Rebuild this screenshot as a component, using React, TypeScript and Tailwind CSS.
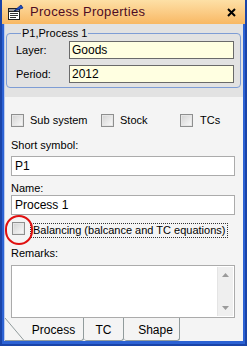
import React from 'react';

const font = { fontFamily: '"Liberation Sans", Arial, sans-serif' };

function CheckBox() {
  return (
    <span className="inline-block w-[13px] h-[13px] border border-[#8e8f8f] bg-gradient-to-br from-[#d2d2d2] to-[#fbfbfb] shadow-[inset_0_0_0_1px_#e6e6e6] shrink-0" />
  );
}

function TitleIcon() {
  return (
    <svg width="17" height="17" viewBox="0 0 17 17" className="shrink-0">
      <rect x="1.5" y="4.5" width="11" height="11" fill="#fff" stroke="#222" />
      <rect x="1.5" y="4.5" width="11" height="3" fill="#9a9a9a" stroke="#222" />
      <line x1="3" y1="9.5" x2="11" y2="9.5" stroke="#333" />
      <line x1="3" y1="11.5" x2="11" y2="11.5" stroke="#333" />
      <line x1="3" y1="13.5" x2="9" y2="13.5" stroke="#333" />
      <path d="M7 7 L14 1 L16 4 Z" fill="#1d4fc4" stroke="#0a2a80" strokeWidth="0.8" />
      <path d="M7 7 L9 6 L8 8 Z" fill="#111" />
    </svg>
  );
}

export default function App() {
  return (
    <div className="w-[247px] h-[346px] flex flex-col bg-[#2c62d4] border-x-2 border-b-2 border-[#1a44a8] text-[11px] text-black" style={font}>
      {/* Title bar */}
      <div className="h-[24px] flex items-center pl-[5px] pr-[9px] bg-gradient-to-b from-[#fde0a6] to-[#f8b863] shrink-0">
        <TitleIcon />
        <span className="ml-[6px] text-[13px] tracking-[0.3px] text-[#4e0c24] flex-1">Process Properties</span>
        <svg width="9" height="9" viewBox="0 0 9 9">
          <path d="M1 1 L8 8 M8 1 L1 8" stroke="#000" strokeWidth="2" />
        </svg>
      </div>

      {/* Body */}
      <div className="mx-[2px] mb-[4px] flex-1 flex flex-col bg-[#f4f4f4] border-l border-[#b9c9ec]">
        {/* Group panel */}
        <div className="bg-[#e2e2e2] pt-[3px] pl-[1px] pr-[2px] pb-[9px]">
          <fieldset className="border border-[#7e9dd5] rounded-[4px] pl-[9px] pr-[6px] pb-[4px]">
            <legend className="px-[1px] ml-[5px] leading-[13px]">P1,Process 1</legend>
            <div className="flex items-center mt-[1px]">
              <span className="w-[53px]">Layer:</span>
              <div className="flex-1 h-[18px] bg-[#ffffe1] border border-[#6a6a6a] flex items-center px-[2px] text-[12px]">Goods</div>
            </div>
            <div className="flex items-center mt-[6px]">
              <span className="w-[53px]">Period:</span>
              <div className="flex-1 h-[18px] bg-[#ffffe1] border border-[#6a6a6a] flex items-center px-[2px] text-[12px]">2012</div>
            </div>
          </fieldset>
        </div>

        {/* Lower panel */}
        <div className="flex-1 flex flex-col pl-[6px] pr-[8px] pt-[17px]">
          <div className="flex items-center h-[13px]">
            <div className="w-[90px] flex items-center gap-[6px]"><CheckBox /><span>Sub system</span></div>
            <div className="w-[79px] flex items-center gap-[6px]"><CheckBox /><span>Stock</span></div>
            <div className="flex items-center gap-[7px]"><CheckBox /><span>TCs</span></div>
          </div>

          <div className="mt-[12px] leading-[13px]">Short symbol:</div>
          <div className="mt-[4px] h-[20px] bg-white border border-[#ababab] flex items-center px-[3px] text-[12px]">P1</div>

          <div className="mt-[6px] leading-[13px]">Name:</div>
          <div className="mt-[0px] h-[20px] bg-white border border-[#ababab] flex items-center px-[3px] text-[12px]">Process 1</div>

          <div className="relative mt-[8px] flex items-center h-[15px]">
            <span className="ml-[1px]"><CheckBox /></span>
            <span className="ml-[5px] border border-dotted border-[#333] px-[2px] leading-[13px] whitespace-nowrap">Balancing (balcance and TC equations)</span>
            <span className="absolute left-[-6px] top-[-8px] w-[28px] h-[30px] rounded-full border-2 border-[#e01010]" />
          </div>

          <div className="mt-[9px] leading-[13px]">Remarks:</div>
          <div className="mt-[5px] h-[53px] bg-white border border-[#ababab] flex justify-end p-[1px]">
            <div className="w-[16px] h-full bg-[#efefef] border-l border-[#e4e4e4] flex flex-col items-center justify-between py-[6px]">
              <svg width="7" height="4" viewBox="0 0 7 4"><path d="M0 4 L3.5 0 L7 4 Z" fill="#9a9a9a" /></svg>
              <svg width="7" height="4" viewBox="0 0 7 4"><path d="M0 0 L3.5 4 L7 0 Z" fill="#9a9a9a" /></svg>
            </div>
          </div>

          {/* Tabs */}
          <div className="flex h-[23px] -ml-[6px] text-[12px]">
            <div className="relative w-[79px] border-r border-b border-[#919b9c] rounded-br-[3px] flex items-center justify-center pl-[19px] pt-[2px]">
              <svg className="absolute left-0 top-0" width="20" height="23" viewBox="0 0 20 23">
                <path d="M0 0 L19 22.5" stroke="#919b9c" strokeWidth="1" />
              </svg>
              Process
            </div>
            <div className="w-[40px] border-r border-b border-[#919b9c] rounded-b-[3px] flex items-center justify-center pt-[2px]">TC</div>
            <div className="w-[56px] border-r border-b border-[#919b9c] rounded-b-[3px] flex items-center justify-center pl-[8px] pt-[2px]">Shape</div>
          </div>
        </div>
      </div>
    </div>
  );
}
